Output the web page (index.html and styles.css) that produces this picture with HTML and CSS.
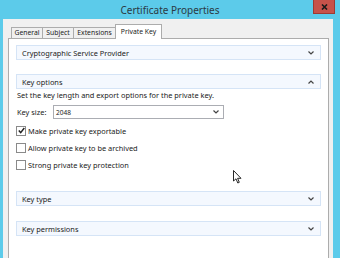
FILE: index.html
```html
<!DOCTYPE html>
<html lang="en">
<head>
  <meta charset="UTF-8">
  <title>Certificate Properties</title>
  <link rel="stylesheet" href="styles.css">
</head>
<body>
  <div class="window">
    <div class="titlebar">
      <span class="title">Certificate Properties</span>
      <button class="close-btn">
        <svg width="7" height="6" viewBox="0 0 7 6"><path d="M1 0.5 L6 5.5 M6 0.5 L1 5.5" stroke="#1a1a1a" stroke-width="1.6"/></svg>
      </button>
    </div>
    <div class="client">
      <div class="tabs">
        <div class="tab tab-general">General</div>
        <div class="tab tab-subject">Subject</div>
        <div class="tab tab-ext">Extensions</div>
        <div class="tab active">Private Key</div>
      </div>
      <div class="page">

        <div class="section">
          <div class="section-head">
            <span>Cryptographic Service Provider</span>
            <svg class="chev" width="6" height="4" viewBox="0 0 6 4"><path d="M0.5 0.5 L3 3 L5.5 0.5" fill="none" stroke="#444" stroke-width="1.2"/></svg>
          </div>
        </div>

        <div class="section">
          <div class="section-head">
            <span>Key options</span>
            <svg class="chev" width="6" height="4" viewBox="0 0 6 4"><path d="M0.5 3.5 L3 1 L5.5 3.5" fill="none" stroke="#444" stroke-width="1.2"/></svg>
          </div>
          <p class="desc">Set the key length and export options for the private key.</p>
          <div class="field">
            <label>Key size:</label>
            <div class="combo">
              <span>2048</span>
              <svg width="6" height="4" viewBox="0 0 6 4"><path d="M0.5 0.5 L3 3 L5.5 0.5" fill="none" stroke="#444" stroke-width="1.2"/></svg>
            </div>
          </div>
          <div class="check">
            <span class="box">
              <svg width="7" height="7" viewBox="0 0 7 7"><path d="M0.8 3.5 L2.7 5.6 L6.3 1" fill="none" stroke="#222" stroke-width="1.5"/></svg>
            </span>
            <span>Make private key exportable</span>
          </div>
          <div class="check">
            <span class="box"></span>
            <span>Allow private key to be archived</span>
          </div>
          <div class="check">
            <span class="box"></span>
            <span>Strong private key protection</span>
          </div>
        </div>

        <div class="section">
          <div class="section-head">
            <span>Key type</span>
            <svg class="chev" width="6" height="4" viewBox="0 0 6 4"><path d="M0.5 0.5 L3 3 L5.5 0.5" fill="none" stroke="#444" stroke-width="1.2"/></svg>
          </div>
        </div>

        <div class="section">
          <div class="section-head">
            <span>Key permissions</span>
            <svg class="chev" width="6" height="4" viewBox="0 0 6 4"><path d="M0.5 0.5 L3 3 L5.5 0.5" fill="none" stroke="#444" stroke-width="1.2"/></svg>
          </div>
        </div>

      </div>
    </div>
  </div>
  <svg class="cursor" width="9" height="15" viewBox="0 0 9 15"><path d="M0.5 0.5 L0.5 11 L3 8.8 L4.8 13 L6.3 12.3 L4.6 8.3 L8 8.3 Z" fill="#fff" stroke="#111" stroke-width="0.9"/></svg>
</body>
</html>
```

FILE: styles.css
```css
body {
  margin: 0;
  width: 340px;
  height: 258px;
  overflow: hidden;
  background: #5ccbea;
  font-family: "Noto Sans", "Open Sans", sans-serif;
  font-size: 7.4px;
  color: #1b1b1b;
  position: relative;
}
.window {
  display: flex;
  flex-direction: column;
  height: 258px;
}
.titlebar {
  height: 19px;
  display: flex;
  align-items: flex-start;
  justify-content: center;
  position: relative;
}
.title {
  font-size: 10px;
  line-height: 20px;
  color: #2b3a44;
}
.close-btn {
  position: absolute;
  right: 5px;
  top: 0;
  width: 22px;
  height: 14px;
  border: 1px solid #9e3a33;
  border-top: none;
  background: #c7524a;
  padding: 0;
  display: flex;
  align-items: center;
  justify-content: center;
}
.client {
  flex: 1;
  margin: 0 7px 0 3px;
  background: #f0f0f0;
  padding: 5px 4px 0 5px;
  display: flex;
  flex-direction: column;
}
.tabs {
  display: flex;
  align-items: flex-end;
  padding-left: 3px;
  height: 14px;
}
.tab {
  box-sizing: border-box;
  height: 11px;
  line-height: 10px;
  font-size: 6.8px;
  text-align: center;
  border: 1px solid #acacac;
  border-bottom: none;
  margin-right: -1px;
  background: #f0f0f0;
  white-space: nowrap;
}
.tab-general { width: 32px; }
.tab-subject { width: 32px; }
.tab-ext { width: 43px; }
.tab.active {
  width: 47px;
  height: 15px;
  line-height: 13px;
  background: #fff;
  position: relative;
  z-index: 1;
  margin-bottom: -1px;
}
.page {
  flex: 1;
  background: #fff;
  border: 1px solid #acacac;
  border-bottom: none;
  padding: 6px 7px 0 7px;
}
.section {
  margin-bottom: 14px;
}
.section-head {
  height: 13px;
  border: 1px solid #d5e4f6;
  background: #f4f8fe;
  display: flex;
  align-items: center;
  justify-content: space-between;
  padding: 0 6px 0 5px;
}
.desc {
  margin: 1px 0 0 1px;
  line-height: 10px;
}
.field {
  display: flex;
  align-items: center;
  margin-top: 5px;
  margin-left: 1px;
}
.field label {
  width: 36px;
}
.combo {
  width: 163px;
  height: 12px;
  border: 1px solid #abadb3;
  display: flex;
  align-items: center;
  justify-content: space-between;
  padding: 0 4px 0 2px;
  font-size: 6.5px;
}
.check {
  display: flex;
  align-items: center;
  gap: 2px;
  height: 11px;
  margin-top: 6px;
}
.check:first-of-type {
  margin-top: 5px;
}
.box {
  width: 8px;
  height: 8px;
  border: 1px solid #8a8a8a;
  background: #fff;
  display: flex;
  align-items: center;
  justify-content: center;
}
.section:nth-child(2) {
  margin-bottom: 21px;
}
.section:nth-child(3) {
  margin-bottom: 15px;
}
.cursor {
  position: absolute;
  left: 233px;
  top: 170px;
}
```
